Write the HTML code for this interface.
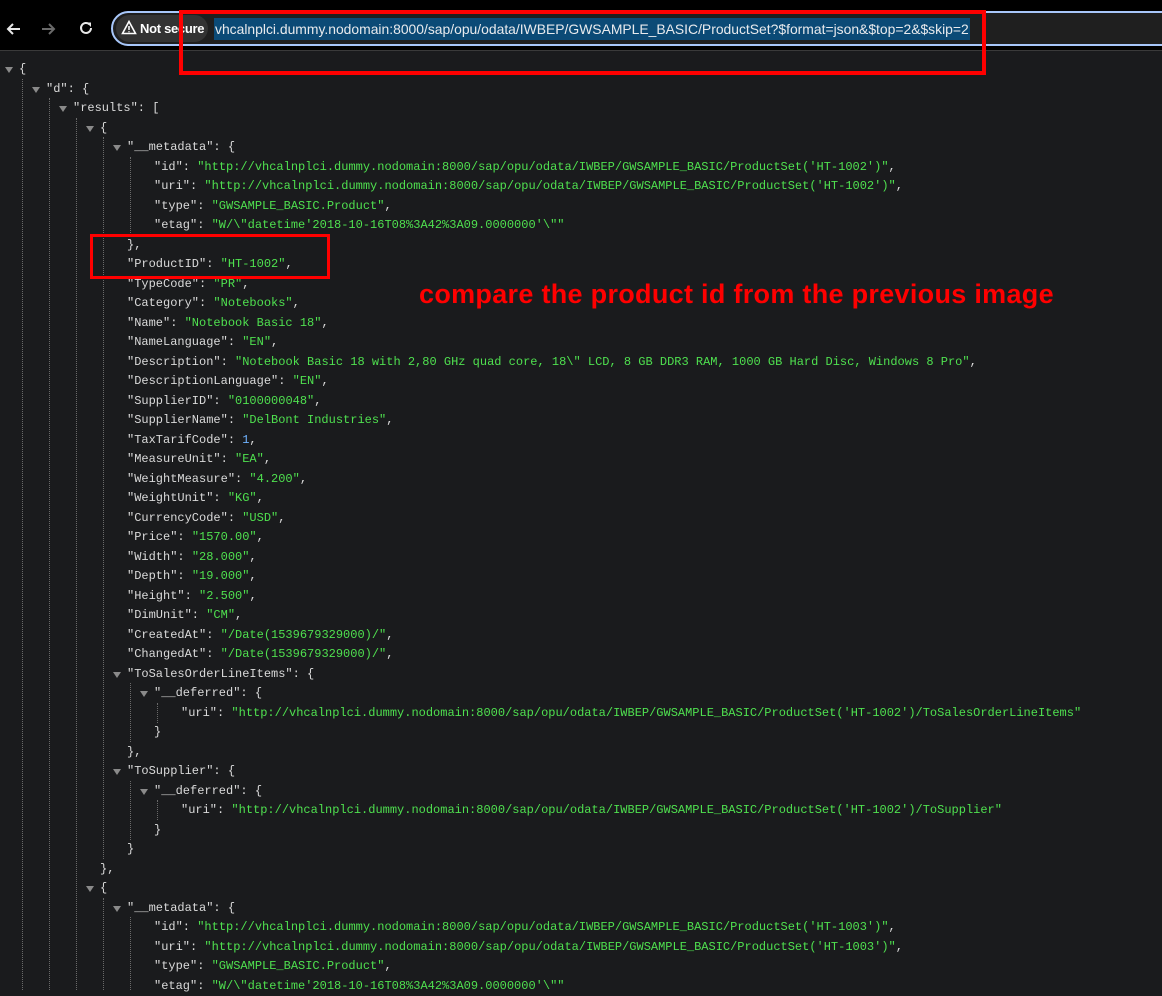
<!DOCTYPE html>
<html><head><meta charset="utf-8"><style>
*{margin:0;padding:0;box-sizing:border-box}
body{width:1162px;height:990px;overflow:hidden;background:#1a1b1d;position:relative;font-family:"Liberation Sans",sans-serif}
.bar{position:absolute;left:0;top:0;width:1162px;height:51px;background:#000;border-bottom:1px solid #3a3a3a}
.pill{position:absolute;left:111px;top:11px;width:1070px;height:35px;border:2px solid #a8c7fa;border-radius:18px;background:#1f1f1f}
.chip{position:absolute;left:116px;top:15px;width:92px;height:27px;border-radius:14px;background:#333;color:#fff;font-weight:bold;font-size:13px;line-height:27px;padding-left:24px;white-space:nowrap;letter-spacing:-0.3px}
.url{position:absolute;left:214px;top:18px;height:22px;background:#0b4a76;color:#e8eaed;font-size:13.9px;line-height:22px;padding:0 1px;white-space:nowrap}
.code{position:absolute;left:0;top:60px;font-family:"Liberation Mono",monospace;font-size:12px;color:#dadada}
.code div{height:19.5px;line-height:19.5px;position:relative;white-space:pre}
.s{color:#4fe04f}.n{color:#6fb3ff}
.t{position:absolute;top:7px;width:0;height:0;border-left:4px solid transparent;border-right:4px solid transparent;border-top:6px solid #8a8a8a}
.g{position:absolute;width:0;border-left:1px dotted #6a6a6a}
.red{position:absolute;border:4px solid #f00}
.note{position:absolute;left:419px;top:279px;color:#f00;font-weight:bold;font-size:27px;letter-spacing:0.3px;white-space:nowrap}
</style></head><body>
<div class="bar"></div>
<svg style="position:absolute;left:5px;top:20px" width="18" height="18" viewBox="0 0 18 18"><path d="M15 9H3M8 4L3 9l5 5" stroke="#e8e8e8" stroke-width="2" fill="none"/></svg>
<svg style="position:absolute;left:39px;top:20px" width="18" height="18" viewBox="0 0 18 18"><path d="M3 9h12M10 4l5 5-5 5" stroke="#6a6a6a" stroke-width="2" fill="none"/></svg>
<svg style="position:absolute;left:77px;top:19px" width="18" height="18" viewBox="0 0 18 18"><path d="M14 9a5 5 0 1 1-1.5-3.6" stroke="#e8e8e8" stroke-width="2" fill="none"/><path d="M9.5 3.5h4.5v4.5z" fill="#e8e8e8"/></svg>
<div class="pill"></div>
<div class="chip">Not secure</div>
<svg style="position:absolute;left:121px;top:20px" width="16" height="15" viewBox="0 0 16 15"><path d="M8 1.5L14.5 13.5H1.5Z" stroke="#fff" stroke-width="1.6" fill="none"/><path d="M8 6v4M8 11.2v1" stroke="#fff" stroke-width="1.5"/></svg>
<div class="url">vhcalnplci.dummy.nodomain:8000/sap/opu/odata/IWBEP/GWSAMPLE_BASIC/ProductSet?$format=json&amp;$top=2&amp;$skip=2</div>

<div class="g" style="left:22px;top:79px;height:911px"></div>
<div class="g" style="left:49px;top:98px;height:892px"></div>
<div class="g" style="left:76px;top:118px;height:872px"></div>
<div class="g" style="left:103px;top:137px;height:722px"></div>
<div class="g" style="left:130px;top:157px;height:78px"></div>
<div class="g" style="left:130px;top:683px;height:59px"></div>
<div class="g" style="left:157px;top:703px;height:20px"></div>
<div class="g" style="left:130px;top:781px;height:59px"></div>
<div class="g" style="left:157px;top:800px;height:20px"></div>
<div class="g" style="left:103px;top:898px;height:92px"></div>
<div class="g" style="left:130px;top:917px;height:73px"></div>

<div class="code"><div style="padding-left:19px"><i class="t" style="left:5px"></i>{</div><div style="padding-left:46px"><i class="t" style="left:32px"></i>"d": {</div><div style="padding-left:73px"><i class="t" style="left:59px"></i>"results": [</div><div style="padding-left:100px"><i class="t" style="left:86px"></i>{</div><div style="padding-left:127px"><i class="t" style="left:113px"></i>"__metadata": {</div><div style="padding-left:154px">"id": <span class="s">"http://vhcalnplci.dummy.nodomain:8000/sap/opu/odata/IWBEP/GWSAMPLE_BASIC/ProductSet('HT-1002')"</span>,</div><div style="padding-left:154px">"uri": <span class="s">"http://vhcalnplci.dummy.nodomain:8000/sap/opu/odata/IWBEP/GWSAMPLE_BASIC/ProductSet('HT-1002')"</span>,</div><div style="padding-left:154px">"type": <span class="s">"GWSAMPLE_BASIC.Product"</span>,</div><div style="padding-left:154px">"etag": <span class="s">"W/\"datetime'2018-10-16T08%3A42%3A09.0000000'\""</span></div><div style="padding-left:127px">},</div><div style="padding-left:127px">"ProductID": <span class="s">"HT-1002"</span>,</div><div style="padding-left:127px">"TypeCode": <span class="s">"PR"</span>,</div><div style="padding-left:127px">"Category": <span class="s">"Notebooks"</span>,</div><div style="padding-left:127px">"Name": <span class="s">"Notebook Basic 18"</span>,</div><div style="padding-left:127px">"NameLanguage": <span class="s">"EN"</span>,</div><div style="padding-left:127px">"Description": <span class="s">"Notebook Basic 18 with 2,80 GHz quad core, 18\" LCD, 8 GB DDR3 RAM, 1000 GB Hard Disc, Windows 8 Pro"</span>,</div><div style="padding-left:127px">"DescriptionLanguage": <span class="s">"EN"</span>,</div><div style="padding-left:127px">"SupplierID": <span class="s">"0100000048"</span>,</div><div style="padding-left:127px">"SupplierName": <span class="s">"DelBont Industries"</span>,</div><div style="padding-left:127px">"TaxTarifCode": <span class="n">1</span>,</div><div style="padding-left:127px">"MeasureUnit": <span class="s">"EA"</span>,</div><div style="padding-left:127px">"WeightMeasure": <span class="s">"4.200"</span>,</div><div style="padding-left:127px">"WeightUnit": <span class="s">"KG"</span>,</div><div style="padding-left:127px">"CurrencyCode": <span class="s">"USD"</span>,</div><div style="padding-left:127px">"Price": <span class="s">"1570.00"</span>,</div><div style="padding-left:127px">"Width": <span class="s">"28.000"</span>,</div><div style="padding-left:127px">"Depth": <span class="s">"19.000"</span>,</div><div style="padding-left:127px">"Height": <span class="s">"2.500"</span>,</div><div style="padding-left:127px">"DimUnit": <span class="s">"CM"</span>,</div><div style="padding-left:127px">"CreatedAt": <span class="s">"/Date(1539679329000)/"</span>,</div><div style="padding-left:127px">"ChangedAt": <span class="s">"/Date(1539679329000)/"</span>,</div><div style="padding-left:127px"><i class="t" style="left:113px"></i>"ToSalesOrderLineItems": {</div><div style="padding-left:154px"><i class="t" style="left:140px"></i>"__deferred": {</div><div style="padding-left:181px">"uri": <span class="s">"http://vhcalnplci.dummy.nodomain:8000/sap/opu/odata/IWBEP/GWSAMPLE_BASIC/ProductSet('HT-1002')/ToSalesOrderLineItems"</span></div><div style="padding-left:154px">}</div><div style="padding-left:127px">},</div><div style="padding-left:127px"><i class="t" style="left:113px"></i>"ToSupplier": {</div><div style="padding-left:154px"><i class="t" style="left:140px"></i>"__deferred": {</div><div style="padding-left:181px">"uri": <span class="s">"http://vhcalnplci.dummy.nodomain:8000/sap/opu/odata/IWBEP/GWSAMPLE_BASIC/ProductSet('HT-1002')/ToSupplier"</span></div><div style="padding-left:154px">}</div><div style="padding-left:127px">}</div><div style="padding-left:100px">},</div><div style="padding-left:100px"><i class="t" style="left:86px"></i>{</div><div style="padding-left:127px"><i class="t" style="left:113px"></i>"__metadata": {</div><div style="padding-left:154px">"id": <span class="s">"http://vhcalnplci.dummy.nodomain:8000/sap/opu/odata/IWBEP/GWSAMPLE_BASIC/ProductSet('HT-1003')"</span>,</div><div style="padding-left:154px">"uri": <span class="s">"http://vhcalnplci.dummy.nodomain:8000/sap/opu/odata/IWBEP/GWSAMPLE_BASIC/ProductSet('HT-1003')"</span>,</div><div style="padding-left:154px">"type": <span class="s">"GWSAMPLE_BASIC.Product"</span>,</div><div style="padding-left:154px">"etag": <span class="s">"W/\"datetime'2018-10-16T08%3A42%3A09.0000000'\""</span></div></div>

<div class="red" style="left:179px;top:10px;width:807px;height:65px"></div>
<div class="red" style="left:90px;top:234px;width:240px;height:45px;border-width:3px"></div>
<div class="note">compare the product id from the previous image</div>
</body></html>
